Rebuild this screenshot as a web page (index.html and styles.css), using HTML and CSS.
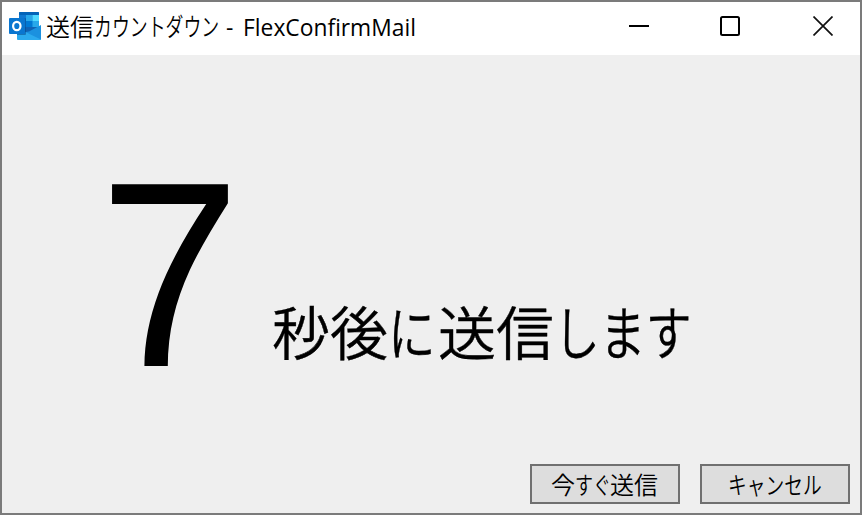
FILE: index.html
```html
<!DOCTYPE html>
<html lang="ja">
<head>
<meta charset="utf-8">
<title>送信カウントダウン - FlexConfirmMail</title>
<link rel="stylesheet" href="styles.css">
</head>
<body>
<div class="window">
  <header class="titlebar">
    <svg class="app-icon" width="32" height="28" viewBox="0 0 32 28">
      <path d="M11 0h18a1 1 0 0 1 1 1v15H10V1a1 1 0 0 1 1-1z" fill="#0f79d2"/>
      <path d="M11 0h18a1 1 0 0 1 1 1v2H10V1a1 1 0 0 1 1-1z" fill="#0364b8"/>
      <path d="M17 3h6.500v6H17z" fill="#28a8ea"/>
      <path d="M23.500 3H30v6h-6.500z" fill="#50d9ff"/>
      <path d="M17 9h6.500v6H17z" fill="#0078d4"/>
      <path d="M23.500 9H30v6h-6.500z" fill="#28a8ea"/>
      <path d="M10 15h20l-7 5H10z" fill="#1062b4"/>
      <path d="M32 13v14a1 1 0 0 1-1 1L14 20.500l6-1z" fill="#1b91df"/>
      <path d="M8 16l24 11.500a1 1 0 0 1-1 .5H9a1 1 0 0 1-1-1z" fill="#2baaee"/>
      <path d="M10 6h6a1 1 0 0 1 1 1v15a1 1 0 0 1-1 1H8V6z" fill="#064b8c" opacity=".55"/>
      <rect y="6" width="16" height="16" rx="1" fill="#0a76d0"/>
      <ellipse cx="7.800" cy="14" rx="3.700" ry="4.200" fill="none" stroke="#fff" stroke-width="2.200"/>
    </svg>
    <h1 class="title">送信<span class="kana">カウントダウン</span><span class="latin">- FlexConfirmMail</span></h1>
    <div class="controls">
      <svg width="20" height="20" viewBox="0 0 20 20"><path d="M0 10h20" stroke="#000" stroke-width="2"/></svg>
      <svg width="20" height="20" viewBox="0 0 20 20"><rect x="1" y="1" width="18" height="18" rx="1.500" fill="none" stroke="#000" stroke-width="2"/></svg>
      <svg width="20" height="20" viewBox="0 0 20 20"><path d="M.5.500l19 19M19.500.500l-19 19" stroke="#111" stroke-width="1.700"/></svg>
    </div>
  </header>
  <main class="content">
    <div class="countdown">
      <span class="number">7</span>
      <p class="message">秒後<span class="kana ni">に</span>送信<span class="kana shimasu">します</span></p>
    </div>
    <footer class="actions">
      <button class="button" type="button">今<span class="kana sugu">すぐ</span>送信</button>
      <button class="button" type="button"><span class="kana cancel">キャンセル</span></button>
    </footer>
  </main>
</div>
</body>
</html>
```
FILE: styles.css
```css
* { box-sizing: border-box; }
body { margin: 0; font-family: "Noto Sans CJK JP", sans-serif; font-weight: 350; color: #000; }
.window {
  width: 862px; height: 515px; border: 2px solid #7b7b7b;
  display: flex; flex-direction: column; background: #efefef; overflow: hidden;
}
.titlebar { height: 53px; flex: none; display: flex; align-items: flex-start; background: #fff; padding: 10px 27px 0 7px; }
.app-icon { flex: none; }
.title { margin: 0 0 0 5px; font-size: 24px; font-weight: 350; line-height: 28px; white-space: nowrap; display: flex; }
.kana { display: inline-block; transform-origin: 0 50%; }
.title .kana { width: 132px; transform: scale(.745, 1.03); }
.latin {
  font-family: "Open Sans", sans-serif; font-weight: 400; line-height: 30px; word-spacing: 4px;
  font-variant-ligatures: common-ligatures discretionary-ligatures;
  transform-origin: 0 50%; transform: scaleX(.95);
}
.controls { margin: 4px 0 0 auto; display: flex; gap: 72px; }
.controls svg:nth-child(2) { margin: 0 1px 0 -1px; }
.content { flex: 1; display: flex; flex-direction: column; justify-content: space-between; }
.countdown { display: flex; align-items: flex-start; padding: 70px 0 0 97px; height: 330px; }
.number {
  font-family: "Liberation Sans", sans-serif; font-weight: 400; font-size: 264px; line-height: 300px;
  width: 173px; transform-origin: 0 50%; transform: scaleX(.965);
}
.message {
  margin: 175px 0 0; font-size: 58px; line-height: 60px; white-space: nowrap; display: flex;
  -webkit-text-stroke: .4px #000;
}
.ni { width: 50px; transform: scaleX(.82); }
.shimasu { transform: scaleX(.79); }
.actions { display: flex; justify-content: flex-end; gap: 20px; padding: 0 10px 9px 0; }
.button {
  width: 150px; height: 40px; padding: 0 0 0 19px; border: 2px solid #707070; background: #ddd;
  font: 350 24px/36px "Noto Sans CJK JP", sans-serif; color: #000; text-align: left; white-space: nowrap; display: flex;
}
.sugu { width: 35px; transform: scaleX(.75); }
.cancel { margin-left: 7px; transform: scaleX(.78); }
```
